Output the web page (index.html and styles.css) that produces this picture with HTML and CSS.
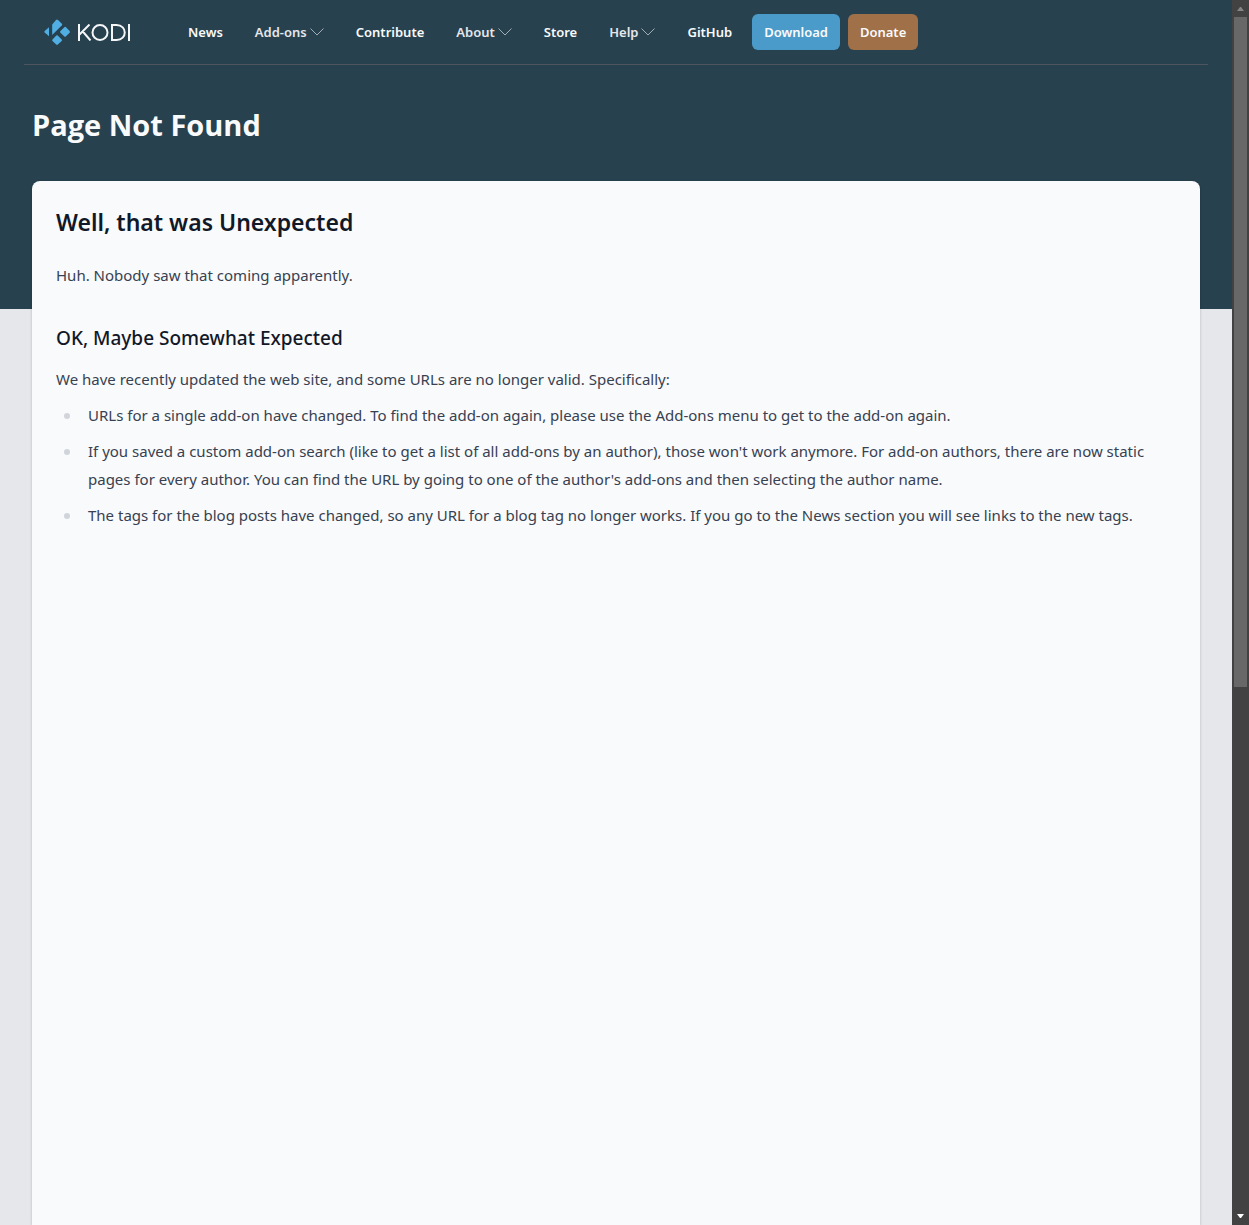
FILE: index.html
```html
<!DOCTYPE html>
<html lang="en">
<head>
<meta charset="utf-8">
<meta name="viewport" content="width=device-width, initial-scale=1">
<title>Page Not Found | Kodi</title>
<link rel="stylesheet" href="styles.css">
</head>
<body>
<div class="window">
  <div class="page">
    <div class="hero">
      <nav class="navbar" aria-label="Main">
        <a class="logo" href="#" aria-label="Kodi">
          <svg class="logo-mark" viewBox="0 0 26 26" aria-hidden="true">
            <path d="M8.200 5.500 L12 1 Q13 .1 14 1 L17.900 4.700 Q18.600 5.500 17.900 6.300 L8.200 16.100Z"/>
            <path d="M20.600 8 Q21.200 7.500 21.800 8 L25.600 12 Q26.300 12.900 25.600 13.700 L21.800 17.500 Q21.100 18.100 20.400 17.500 L16.500 13.700 Q15.700 12.900 16.500 12.100Z"/>
            <path d="M12.300 16.600 Q13 16 13.700 16.600 L17.700 20.600 Q18.400 21.300 17.700 22 L13.800 25.600 Q13 26.400 12.200 25.600 L8.500 22 Q7.800 21.300 8.500 20.500Z"/>
            <path d="M5 8.200 V17.300 L.7 13.500 Q0 12.800 .7 12.100Z"/>
          </svg>
          <svg class="logo-word" viewBox="0 0 52 17" aria-hidden="true">
            <path d="M1 0V17M11.500 .5L1.500 10.500M4.800 7.500L12.500 16.500M34 1H38.500C49.500 1 49.500 16 38.500 16H34ZM51 0V17"/>
            <circle cx="22" cy="8.500" r="7.500"/>
          </svg>
        </a>
        <ul class="menu">
          <li><a class="item" href="#">News</a></li>
          <li><button class="item dim" type="button">Add-ons<svg class="chevron" viewBox="0 0 14 8" aria-hidden="true"><path d="M.5 .5L7 7L13.500 .5"/></svg></button></li>
          <li><a class="item" href="#">Contribute</a></li>
          <li><button class="item dim" type="button">About<svg class="chevron" viewBox="0 0 14 8" aria-hidden="true"><path d="M.5 .5L7 7L13.500 .5"/></svg></button></li>
          <li><a class="item" href="#">Store</a></li>
          <li><button class="item dim" type="button">Help<svg class="chevron" viewBox="0 0 14 8" aria-hidden="true"><path d="M.5 .5L7 7L13.500 .5"/></svg></button></li>
          <li><a class="item" href="#">GitHub</a></li>
          <li><a class="item download" href="#">Download</a></li>
          <li><a class="item donate" href="#">Donate</a></li>
        </ul>
      </nav>
      <h1 class="title">Page Not Found</h1>
    </div>
    <main class="card">
      <h2 class="heading">Well, that was Unexpected</h2>
      <p class="text lead">Huh. Nobody saw that coming apparently.</p>
      <h3 class="subheading">OK, Maybe Somewhat Expected</h3>
      <p class="text">We have recently updated the web site, and some URLs are no longer valid. Specifically:</p>
      <ul class="list">
        <li class="text">URLs for a single add-on have changed. To find the add-on again, please use the Add-ons menu to get to the add-on again.</li>
        <li class="text">If you saved a custom add-on search (like to get a list of all add-ons by an author), those won't work anymore. For add-on authors, there are now static pages for every author. You can find the URL by going to one of the author's add-ons and then selecting the author name.</li>
        <li class="text">The tags for the blog posts have changed, so any URL for a blog tag no longer works. If you go to the News section you will see links to the new tags.</li>
      </ul>
    </main>
  </div>
  <div class="scrollbar" aria-hidden="true">
    <svg class="arrow up" viewBox="0 0 7 4"><path d="M0 4H7L4 0H3Z"/></svg>
    <div class="track"><div class="thumb"></div><div class="rest"></div></div>
    <svg class="arrow down" viewBox="0 0 7 4"><path d="M0 0H7L4 4H3Z"/></svg>
  </div>
</div>
</body>
</html>
```
FILE: styles.css
```css
* { box-sizing: border-box; }
body {
  margin: 0;
  background: #e5e7eb;
  font-family: "Noto Sans", "Open Sans", sans-serif;
}
h1, h2, h3, p, ul { margin: 0; padding: 0; }

.window { display: flex; height: 100vh; overflow: hidden; }
.page { flex: 1; min-width: 0; display: flex; flex-direction: column; }

.hero { flex: none; padding: 0 24px 164px; background: #27414f; }
.navbar {
  display: flex;
  align-items: center;
  height: 65px;
  border-bottom: 1px solid #4f5560;
}
.logo { display: flex; align-items: center; gap: 8px; margin: 0 46px 0 20px; }
.logo-mark { width: 26px; height: 26px; fill: #50aee3; }
.logo-word { width: 52px; height: 17px; fill: none; stroke: #f4f6f8; stroke-width: 2; }
.menu { display: flex; gap: 8px; list-style: none; }
.item {
  display: flex;
  align-items: center;
  height: 36px;
  padding: 0 12px;
  border: 0;
  border-radius: 6px;
  background: none;
  color: #f9fafb;
  font: 600 13px/20px "Noto Sans", "Open Sans", sans-serif;
  text-decoration: none;
}
.dim { color: #e5e7eb; }
.chevron { width: 14px; height: 8px; margin-left: 3px; fill: none; stroke: #a3adb8; }
.download { background: #4a9bc9; }
.donate { background: #a07048; }
.title {
  padding: 40px 8px 0;
  color: #f9fafb;
  font: 700 29px/40px "Open Sans", "Noto Sans", sans-serif;
}

.card {
  flex: 1;
  margin: -128px 32px 0;
  padding: 24px 24px 0;
  border-radius: 8px 8px 0 0;
  background: #f9fafb;
  box-shadow: 0 1px 3px rgba(0, 0, 0, 0.2);
}
.heading { color: #111827; font-size: 23px; line-height: 34px; font-weight: 600; }
.text { color: #374151; font-size: 15px; line-height: 28px; }
.lead { margin: 22px 0 32px; }
.subheading { padding-top: 2px; margin-bottom: 12px; color: #111827; font-size: 19px; line-height: 30px; font-weight: 500; }
.list { list-style: none; }
.list li { position: relative; margin-top: 8px; padding-left: 32px; }
.list li::before {
  content: "";
  position: absolute;
  left: 8px;
  top: 12px;
  width: 6px;
  height: 6px;
  border-radius: 50%;
  background: #d1d5db;
}

.scrollbar {
  flex: none;
  display: flex;
  flex-direction: column;
  align-items: center;
  width: 17px;
  padding: 7px 2px;
  background: #424242;
}
.arrow { width: 7px; height: 4px; }
.up { fill: #868686; }
.down { fill: #ffffff; }
.track { flex: 1; display: flex; flex-direction: column; width: 13px; padding: 6px 0; }
.thumb { flex: 9; background: #686868; }
.rest { flex: 7; }
```
